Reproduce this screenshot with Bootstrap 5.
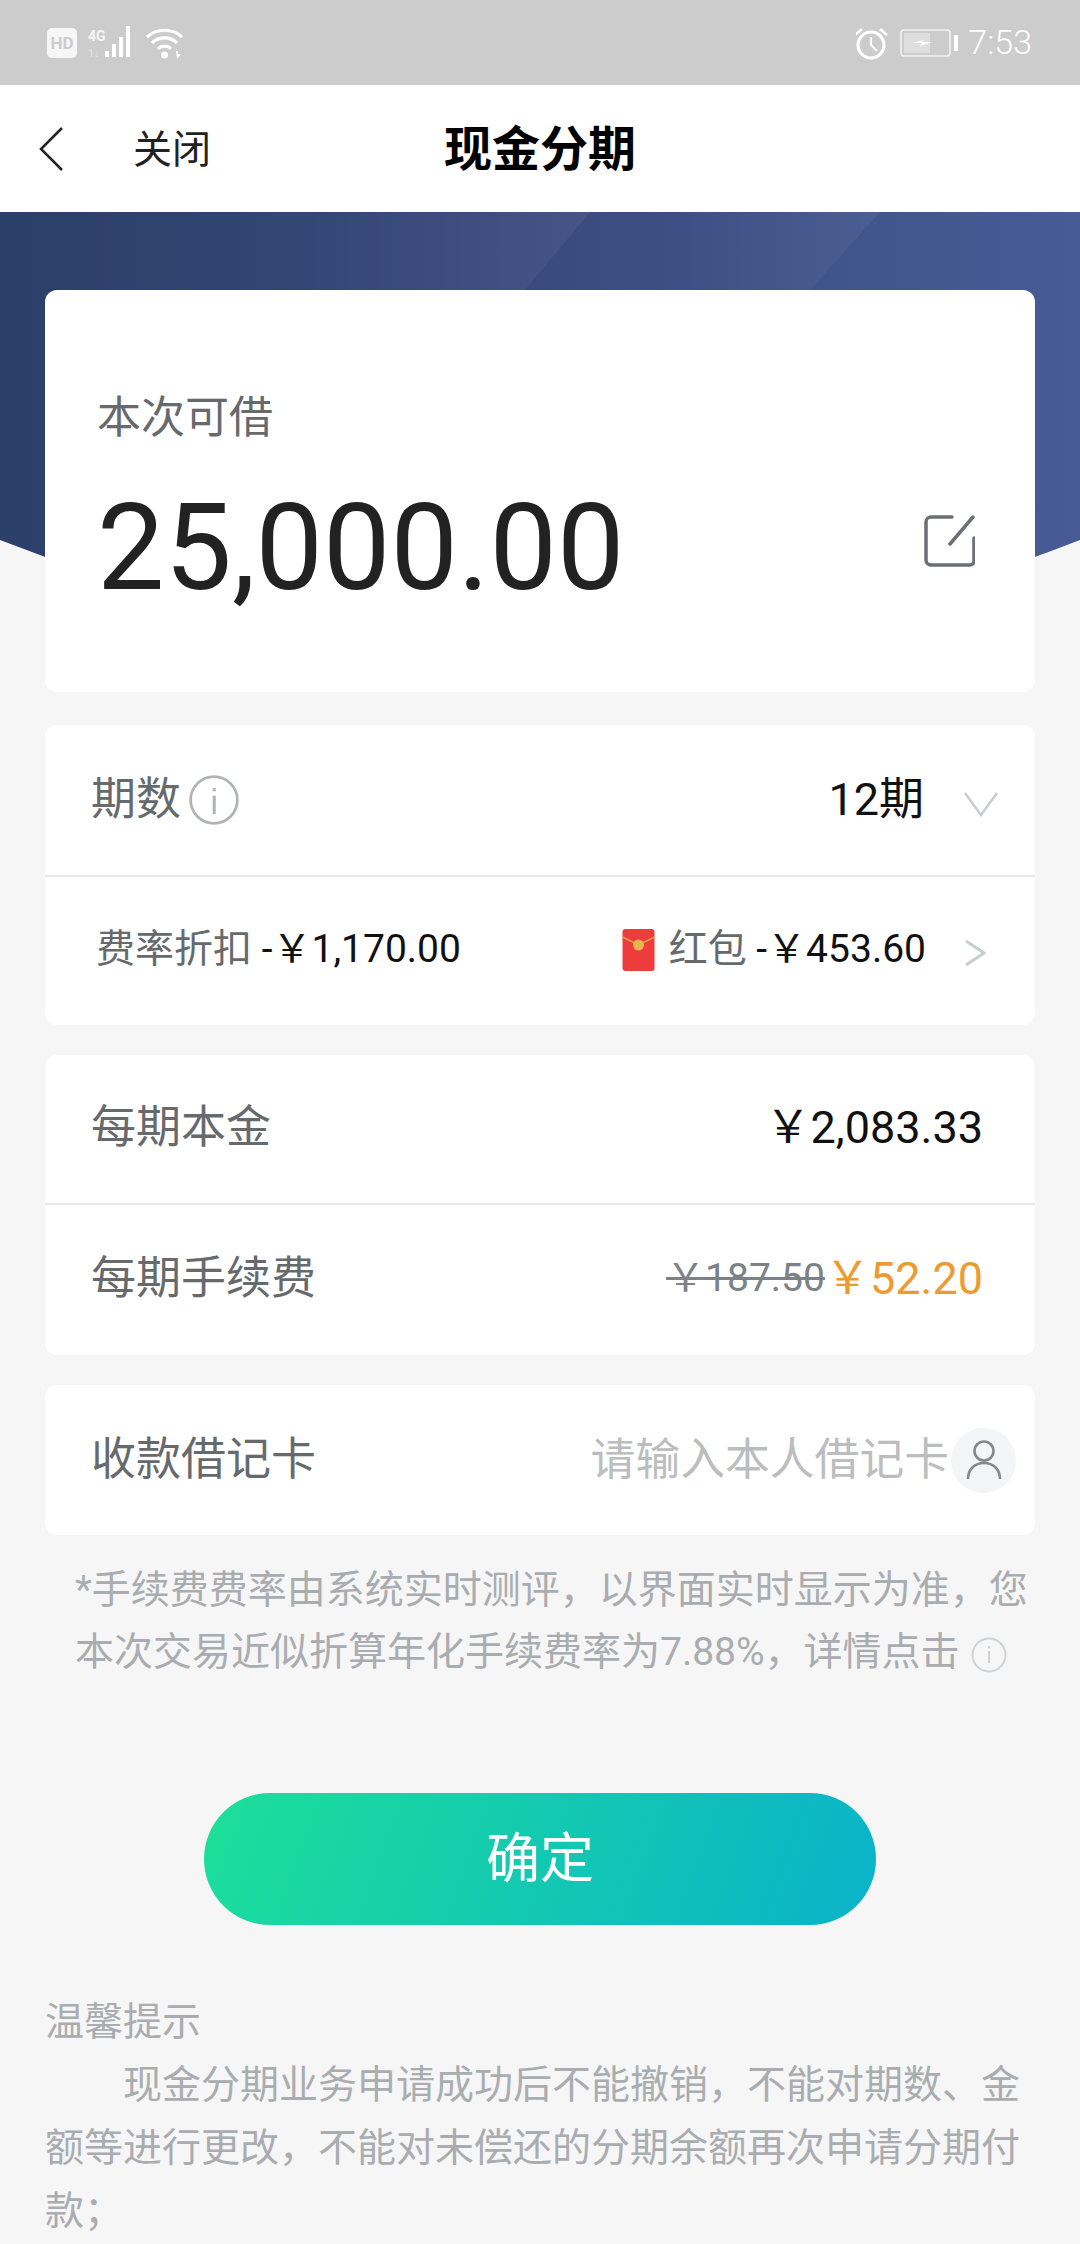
<!DOCTYPE html>
<html lang="zh">
<head>
    <meta charset="UTF-8">
    <title>现金分期</title>
    <link href="https://cdn.jsdelivr.net/npm/bootstrap@5.3.2/dist/css/bootstrap.min.css" rel="stylesheet">
    <style>
        html, body {
            height: 2244px;
            overflow: hidden;
        }
        body {
            background: #f6f6f6;
            font-family: Roboto, "Noto Sans CJK SC", sans-serif;
            color: #666a6d;
        }
        .status-strip {
            height: 85px;
            background: #cccccc;
            padding: 0 48px 0 47px;
            color: #fff;
        }
        .status-time {
            font-size: 34px;
            font-weight: 300;
            margin-left: 9px;
        }
        .top-bar {
            height: 127px;
            background: #fff;
            padding-left: 38px;
        }
        .close-link {
            font-size: 39px;
            color: #222;
            margin-left: 69px;
            padding-top: 3px;
        }
        .page-title {
            left: 0;
            right: 0;
            top: 0;
            bottom: 0;
            padding-top: 2px;
            font-size: 48px;
            font-weight: 700;
            color: #000;
        }
        .hero-band {
            display: block;
            width: 1080px;
            height: 388px;
        }
        .sheet {
            margin: -310px 45px 0;
        }
        .panel {
            border: 0;
            border-radius: 12px;
            margin-bottom: 30px;
            background: #fff;
        }
        .amount-panel {
            height: 402px;
            padding: 98px 60px 0 52px;
            margin-bottom: 33px;
        }
        .amount-label {
            font-size: 44px;
            line-height: 60px;
        }
        .amount-value {
            font-size: 120px;
            line-height: 140px;
            color: #222;
            margin-top: 30px;
        }
        .info-row {
            font-size: 45px;
            padding: 0 52px 0 46px;
        }
        .row-a { height: 152px; }
        .row-b { height: 150px; }
        .row-lift { padding-bottom: 3px; }
        .row-sep { border-bottom: 2px solid #e9e9e9; }
        .row-small {
            font-size: 39px;
            padding: 0 49px 3px 51px;
            height: 148px;
        }
        .ink { color: #111; }
        .fee-old {
            font-size: 39px;
            color: #7c8286;
            text-decoration: line-through;
        }
        .fee-new {
            color: #ee9a30;
        }
        .card-hint {
            color: #bbbdbe;
            font-size: 44.800px;
        }
        .person-dot {
            width: 65px;
            height: 65px;
            background: #f4f5f6;
            border-radius: 50%;
            margin-right: -33px;
            margin-left: 2px;
        }
        .drop-arrow {
            margin: 8px -16px 0 39px;
        }
        .go-arrow {
            margin: 6px 0 0 38px;
        }
        .packet-icon {
            margin-right: 14px;
        }
        .fee-note {
            font-size: 39px;
            line-height: 62px;
            color: #a9adb0;
            margin: 24px 0 0 75px;
            height: 124px;
            white-space: nowrap;
        }
        .note-info {
            margin-left: 2px;
        }
        .confirm-btn {
            display: block;
            width: 672px;
            height: 132px;
            margin: 110px auto 0;
            border: 0;
            border-radius: 66px;
            background: linear-gradient(110deg, #1ddf99, #0ab2c9);
            color: #fff;
            font-size: 54px;
        }
        .tips {
            font-size: 39px;
            line-height: 63px;
            color: #a9adb0;
            margin-top: 66px;
            padding-left: 45px;
        }
        .tips-body {
            text-indent: 78px;
            width: 985px;
            margin: 0;
        }
    </style>
</head>
<body>

<div class="status-strip d-flex align-items-center justify-content-between">
    <div class="d-flex align-items-center">
        <svg width="140" height="36" viewBox="0 0 140 36">
            <rect x="0" y="3" width="30" height="30" rx="5" fill="#f6f6f6"/>
            <text x="15" y="24" text-anchor="middle" font-family="Roboto" font-weight="700" font-size="17" fill="#ccc">HD</text>
            <text x="41" y="16" font-family="Roboto" font-weight="700" font-size="14" fill="#f4f4f4">4G</text>
            <text x="41" y="32" font-family="Roboto" font-size="11" fill="#e2e2e2">1↓</text>
            <rect x="58" y="26" width="4" height="6" fill="#fff"/>
            <rect x="65" y="19" width="4" height="13" fill="#fff"/>
            <rect x="72" y="12" width="4" height="20" fill="#fff"/>
            <rect x="79" y="1" width="4" height="31" fill="#fff"/>
            <g fill="none" stroke="#fff" stroke-width="3.2">
                <path d="M100 12a26 26 0 0 1 35 0"/>
                <path d="M105 18a18 18 0 0 1 25 0"/>
                <path d="M111 24a9 9 0 0 1 13 0"/>
            </g>
            <circle cx="117.500" cy="30" r="3.500" fill="#fff"/>
            <path d="M129 26h2v3h3l-4 5z" fill="#fff"/>
        </svg>
    </div>
    <div class="d-flex align-items-center">
        <svg width="103" height="36" viewBox="0 0 103 36">
            <g fill="none" stroke="#fff" stroke-width="3.200">
                <circle cx="15" cy="20" r="13"/>
                <path d="M15 12v8l6 6" stroke-width="2.200"/>
                <path d="M-1 10l7-6M31 10l-7-6" stroke-width="2.600"/>
            </g>
            <rect x="45" y="5" width="49" height="26" rx="3" fill="none" stroke="#f2f2f2" stroke-width="1.600"/>
            <rect x="48" y="8" width="26" height="20" fill="#dedede"/>
            <path d="M56 18l12-3-2 2h10l-12 4 2-3z" fill="#fff"/>
            <rect x="98" y="10" width="4" height="16" rx="1" fill="#fff"/>
        </svg>
        <span class="status-time">7:53</span>
    </div>
</div>

<div class="top-bar d-flex align-items-center position-relative">
    <svg width="26" height="46" viewBox="0 0 26 46">
        <path d="M24 2L3 23l21 21" fill="none" stroke="#222" stroke-width="2.500"/>
    </svg>
    <span class="close-link">关闭</span>
    <div class="page-title position-absolute d-flex align-items-center justify-content-center">现金分期</div>
</div>

<svg class="hero-band" viewBox="0 0 1080 388">
    <defs>
        <linearGradient id="heroFill" x1="0" x2="1" y1="0" y2="0">
            <stop offset="0" stop-color="#2c3f68"/>
            <stop offset=".5" stop-color="#394b7e"/>
            <stop offset="1" stop-color="#485b95"/>
        </linearGradient>
        <linearGradient id="heroGlow" x1="0" x2="1" y1="0" y2="0">
            <stop offset="0" stop-color="#fff" stop-opacity="0"/>
            <stop offset="1" stop-color="#fff" stop-opacity=".05"/>
        </linearGradient>
    </defs>
    <path d="M0 0H1080V328Q540 540 0 328Z" fill="url(#heroFill)"/>
    <path d="M300 0H590L525 78H300Z" fill="url(#heroGlow)"/>
    <path d="M680 0H880L810 78H680Z" fill="url(#heroGlow)"/>
</svg>

<div class="sheet">
    <div class="card panel amount-panel">
        <div class="amount-label">本次可借</div>
        <div class="d-flex align-items-center justify-content-between">
            <div class="amount-value">25,000.00</div>
            <svg width="52" height="52" viewBox="0 0 52 52" class="mt-3">
                <path d="M29 2H8a5 5 0 0 0-5 5v38a5 5 0 0 0 5 5h39a4 4 0 0 0 4-4V23" fill="none" stroke="#6c7074" stroke-width="3.500" stroke-linecap="round"/>
                <path d="M27 29L50 2" fill="none" stroke="#6c7074" stroke-width="3.500" stroke-linecap="round"/>
            </svg>
        </div>
    </div>

    <div class="card panel">
        <div class="info-row row-a row-sep d-flex align-items-center justify-content-between">
            <div class="d-flex align-items-center">
                <span>期数</span>
                <svg class="ms-2" width="50" height="50" viewBox="0 0 46 46">
                    <circle cx="23" cy="23" r="21.500" fill="none" stroke="#b1b4b6" stroke-width="2.500"/>
                    <rect x="21.800" y="19" width="2.800" height="17" fill="#b1b4b6"/>
                    <rect x="21.800" y="12" width="2.800" height="3" fill="#b1b4b6"/>
                </svg>
            </div>
            <div class="d-flex align-items-center">
                <span class="ink">12期</span>
                <svg class="drop-arrow" width="36" height="26" viewBox="0 0 36 26">
                    <path d="M2 2l16 22L34 2" fill="none" stroke="#c8cdd0" stroke-width="2.500"/>
                </svg>
            </div>
        </div>
        <div class="info-row row-small d-flex align-items-center justify-content-between">
            <div>费率折扣 <span class="ink">-￥1,170.00</span></div>
            <div class="d-flex align-items-center">
                <svg class="packet-icon" width="33" height="42" viewBox="0 0 32 42">
                    <rect width="32" height="42" rx="3" fill="#ee3b3b"/>
                    <path d="M0 8l16 8 16-8" fill="none" stroke="#e9a24e" stroke-width="1.500"/>
                    <circle cx="16" cy="16" r="5.500" fill="#eab44e"/>
                </svg>
                <span>红包 <span class="ink">-￥453.60</span></span>
                <svg class="go-arrow" width="22" height="28" viewBox="0 0 22 28">
                    <path d="M2 2l18 12L2 26" fill="none" stroke="#c6ced3" stroke-width="3"/>
                </svg>
            </div>
        </div>
    </div>

    <div class="card panel">
        <div class="info-row row-b row-lift row-sep d-flex align-items-center justify-content-between">
            <span>每期本金</span>
            <span class="ink">￥2,083.33</span>
        </div>
        <div class="info-row row-b row-lift d-flex align-items-center justify-content-between">
            <span>每期手续费</span>
            <span class="d-flex align-items-center">
                <span class="fee-old">￥187.50</span>
                <span class="fee-new">￥52.20</span>
            </span>
        </div>
    </div>

    <div class="card panel mb-0">
        <div class="info-row row-b d-flex align-items-center justify-content-between">
            <span>收款借记卡</span>
            <span class="d-flex align-items-center">
                <span class="card-hint">请输入本人借记卡</span>
                <span class="person-dot d-flex align-items-center justify-content-center">
                    <svg width="36" height="42" viewBox="0 0 36 42">
                        <circle cx="18" cy="12" r="9.500" fill="none" stroke="#85898c" stroke-width="2.600"/>
                        <path d="M2 40c0-10 7-16 16-16s16 6 16 16" fill="none" stroke="#85898c" stroke-width="2.600"/>
                    </svg>
                </span>
            </span>
        </div>
    </div>
</div>

<div class="fee-note">*手续费费率由系统实时测评，以界面实时显示为准，您<br>本次交易近似折算年化手续费率为7.88%，详情点击
    <svg class="note-info align-middle" width="36" height="36" viewBox="0 0 36 36">
        <circle cx="18" cy="18" r="16.500" fill="none" stroke="#cfd2d4" stroke-width="2"/>
        <rect x="17" y="14" width="2" height="12" fill="#cfd2d4"/>
        <rect x="17" y="9" width="2" height="2.500" fill="#cfd2d4"/>
    </svg>
</div>
<button type="button" class="btn confirm-btn">确定</button>
<div class="tips">
    <div>温馨提示</div>
    <p class="tips-body">现金分期业务申请成功后不能撤销，不能对期数、金额等进行更改，不能对未偿还的分期余额再次申请分期付款；</p>
</div>

</body>
</html>
